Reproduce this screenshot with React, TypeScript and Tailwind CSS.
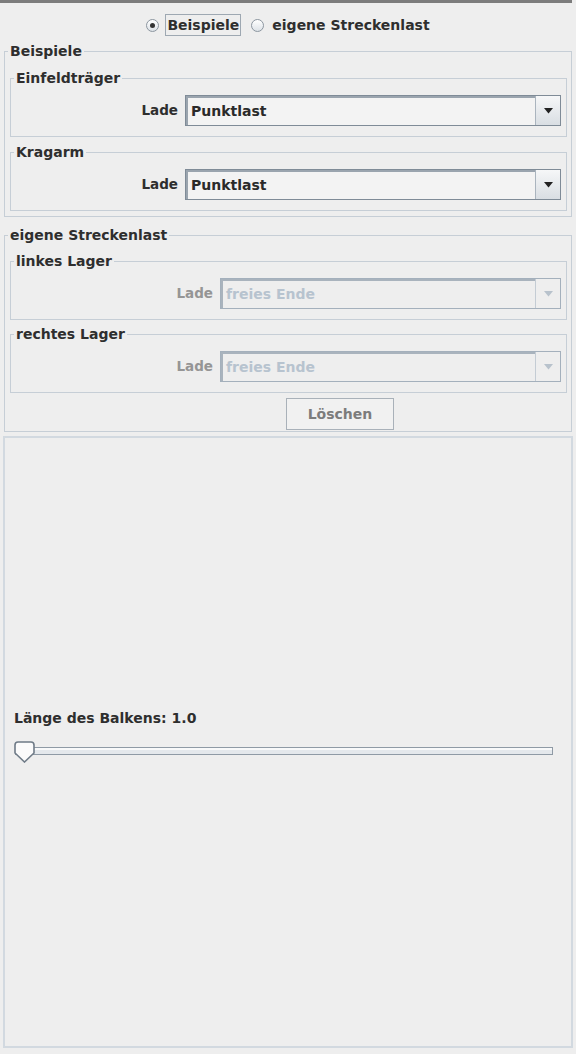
import React from "react";

function Radio({ checked }: { checked?: boolean }) {
  return (
    <span className="relative inline-flex h-[13px] w-[13px] items-center justify-center rounded-full border border-[#8c96a0] bg-gradient-to-b from-[#ffffff] to-[#dde2e7]">
      {checked && <span className="h-[5px] w-[5px] rounded-full bg-[#333333]" />}
    </span>
  );
}

function Arrow({ disabled }: { disabled?: boolean }) {
  return (
    <svg width="9" height="6" viewBox="0 0 9 6">
      <polygon points="0,0 9,0 4.5,5.5" fill={disabled ? "#b8c2cc" : "#222222"} />
    </svg>
  );
}

function Combo({ value, disabled, width }: { value: string; disabled?: boolean; width: string }) {
  return (
    <div
      className={`flex h-[31px] ${width} border ${
        disabled ? "border-[#a4b0bc]" : "border-[#7f8b97]"
      }`}
    >
      <div
        className={`flex flex-1 items-center pl-[3px] text-[14px] font-bold ${
          disabled
            ? "bg-[#eeeeee] text-[#b7c3cf] border-t-2 border-l-2 border-[#a9b3bd]"
            : "bg-[#f3f3f3] text-[#2a2a2a] border-t-2 border-l-2 border-[#9aa4ae]"
        }`}
      >
        {value}
      </div>
      <div
        className={`flex w-[25px] items-center justify-center border-l ${
          disabled ? "border-[#c4ccd4] bg-[#eeeeee]" : "border-[#aab4be] bg-gradient-to-b from-[#f6f7f8] to-[#d9dee3]"
        }`}
      >
        <Arrow disabled={disabled} />
      </div>
    </div>
  );
}

function Titled({
  title,
  className,
  legendClass,
  children,
}: {
  title: string;
  className?: string;
  legendClass?: string;
  children?: React.ReactNode;
}) {
  return (
    <fieldset className={`border border-[#c6ced6] ${className ?? ""}`}>
      <legend
        className={`${legendClass ?? "ml-[3px]"} px-[2px] text-[14px] font-bold leading-[14px] text-[#2e2e2e]`}
      >
        {title}
      </legend>
      {children}
    </fieldset>
  );
}

function ComboRow({
  value,
  disabled,
  width,
}: {
  value: string;
  disabled?: boolean;
  width: string;
}) {
  return (
    <div className="flex items-center justify-end pt-[10px] pb-[10px] pr-[5px]">
      <span
        className={`mr-[7px] text-[13.5px] font-bold ${disabled ? "text-[#959595]" : "text-[#2e2e2e]"}`}
      >
        Lade
      </span>
      <Combo value={value} disabled={disabled} width={width} />
    </div>
  );
}

export default function App() {
  return (
    <div className="h-[1054px] w-[576px] overflow-hidden bg-[#eeeeee] font-['DejaVu_Sans','Liberation_Sans',sans-serif] text-[#2e2e2e]">
      <div className="mr-[4px] h-[3px] bg-[#7c7c7c]" />

      <div className="flex h-[41px] items-center justify-center pt-[3px]">
        <div className="flex items-center">
          <Radio checked />
          <span className="ml-[6px] border border-[#9ea8b2] px-[1px] py-[2px] text-[14px] font-bold leading-[16px]">
            Beispiele
          </span>
        </div>
        <div className="ml-[10px] flex items-center">
          <Radio />
          <span className="ml-[8px] text-[14px] font-bold leading-[16px]">eigene Streckenlast</span>
        </div>
      </div>

      <Titled title="Beispiele" legendClass="ml-[-2px]" className="mx-[4px] pl-[5px] pr-[4px] pb-[5px]">
        <Titled title="Einfeldträger" className="mt-[13px]">
          <ComboRow value="Punktlast" width="w-[376px]" />
        </Titled>
        <Titled title="Kragarm" className="mt-[8px]">
          <ComboRow value="Punktlast" width="w-[376px]" />
        </Titled>
      </Titled>

      <Titled
        title="eigene Streckenlast"
        legendClass="ml-[-2px]"
        className="mx-[4px] mt-[11px] pl-[5px] pr-[4px] pb-[1px]"
      >
        <Titled title="linkes Lager" className="mt-[12px]">
          <ComboRow value="freies Ende" disabled width="w-[341px]" />
        </Titled>
        <Titled title="rechtes Lager" className="mt-[7px]">
          <ComboRow value="freies Ende" disabled width="w-[341px]" />
        </Titled>
        <div className="flex pt-[5px] pl-[276px]">
          <button className="h-[32px] w-[108px] border border-[#a9b1b9] bg-[#f1f1f1] text-[14px] font-bold text-[#7c7c7c]">
            Löschen
          </button>
        </div>
      </Titled>

      <div className="mx-[3px] mt-[4px] h-[612px] border-2 border-[#d2d9e0] px-[9px] pt-[272px]">
        <div className="text-[14px] font-bold leading-[16px] text-[#2e2e2e]">Länge des Balkens: 1.0</div>
        <div className="relative mt-[15px] h-[22px] w-[539px]">
          <div className="absolute left-[1px] right-0 top-[6px] h-[8px] border border-[#8f9aa5] bg-[#e4e8ec]">
            <div className="h-[2px] bg-[#f8f9fa]" />
          </div>
          <svg className="absolute left-0 top-0" width="21" height="22" viewBox="0 0 21 22">
            <path
              d="M4 1 H17 Q20 1 20 4 V12 L10.5 21 L1 12 V4 Q1 1 4 1 Z"
              fill="#fbfbfb"
              stroke="#6f7b87"
              strokeWidth="1.6"
            />
          </svg>
        </div>
      </div>
    </div>
  );
}
